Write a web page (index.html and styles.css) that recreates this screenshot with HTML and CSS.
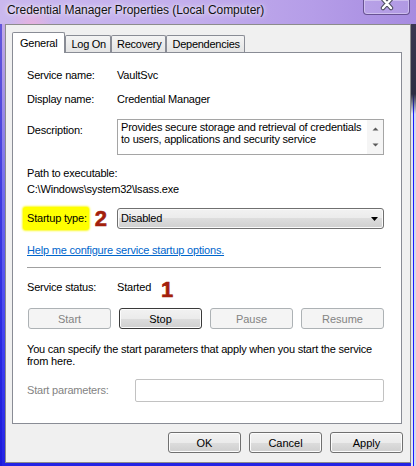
FILE: index.html
```html
<!DOCTYPE html>
<html>
<head>
<meta charset="utf-8">
<title>Credential Manager Properties (Local Computer)</title>
<link rel="stylesheet" href="styles.css">
</head>
<body>
<div class="frame">
  <div class="titlebar">
    <span class="title">Credential Manager Properties (Local Computer)</span>
    <div class="close">
      <svg width="14" height="11" viewBox="0 0 14 11">
        <path d="M3 -1 L11 8 M11 -1 L3 8" stroke="#4c4c5e" stroke-width="4.4" stroke-linecap="round"/>
        <path d="M3 -1 L11 8 M11 -1 L3 8" stroke="#ffffff" stroke-width="2.4" stroke-linecap="round"/>
      </svg>
    </div>
  </div>
  <div class="client">
    <div class="tabs">
      <div class="tab selected">General</div>
      <div class="tab">Log On</div>
      <div class="tab">Recovery</div>
      <div class="tab">Dependencies</div>
    </div>
    <div class="panel">
      <div class="row r-name">
        <span class="label">Service name:</span>
        <span>VaultSvc</span>
      </div>
      <div class="row r-display">
        <span class="label">Display name:</span>
        <span>Credential Manager</span>
      </div>
      <div class="row r-desc">
        <span class="label">Description:</span>
        <div class="desc">
          <div class="desc-text">Provides secure storage and retrieval of credentials<br>to users, applications and security service</div>
          <div class="scroll">
            <svg width="7" height="4" viewBox="0 0 7 4"><path d="M0.5 3.5 L3.5 0.5 L6.5 3.5 Z" fill="#5a5a5a"/></svg>
            <svg width="7" height="4" viewBox="0 0 7 4"><path d="M0.5 0.5 L3.5 3.5 L6.5 0.5 Z" fill="#5a5a5a"/></svg>
          </div>
        </div>
      </div>
      <div class="row r-path">Path to executable:</div>
      <div class="row r-exe">C:\Windows\system32\lsass.exe</div>
      <div class="row r-startup">
        <span class="label">
          <span class="hl">Startup type:</span>
          <span class="mark mark-2">2</span>
        </span>
        <div class="select">
          <span>Disabled</span>
          <svg width="7" height="4" viewBox="0 0 7 4"><path d="M0 0 L7 0 L3.5 4 Z" fill="#000"/></svg>
        </div>
      </div>
      <div class="row r-link"><a class="link" href="#">Help me configure service startup options.</a></div>
      <div class="sep"></div>
      <div class="row r-status">
        <span class="label">Service status:</span>
        <span>Started</span>
        <span class="mark mark-1">1</span>
      </div>
      <div class="svc-buttons">
        <button class="btn disabled">Start</button>
        <button class="btn stop">Stop</button>
        <button class="btn disabled">Pause</button>
        <button class="btn disabled">Resume</button>
      </div>
      <div class="para">You can specify the start parameters that apply when you start the service<br>from here.</div>
      <div class="row r-params">
        <span class="label label-params">Start parameters:</span>
        <div class="param-input"></div>
      </div>
    </div>
    <div class="actions">
      <button class="btn dlg">OK</button>
      <button class="btn dlg">Cancel</button>
      <button class="btn dlg">Apply</button>
    </div>
  </div>
</div>
</body>
</html>
```

FILE: styles.css
```css
body {
  margin: 0;
  font-family: "Liberation Sans", Arial, sans-serif;
  font-size: 11px;
  color: #000;
}

/* window frame */
.frame {
  width: 416px;
  height: 466px;
  box-sizing: border-box;
  padding: 0 5px 3px 5px;
  display: flex;
  flex-direction: column;
  background:
    linear-gradient(to bottom, #3a3650 0, #2e2e42 70px, rgba(46, 46, 66, 0) 90px) right 0 top 24px / 5px 120px no-repeat,
    linear-gradient(to right, #dfe5f5 0, #dfe5f5 2px, #1a1aff 2px, #1a1aff 3px, #cfdaf2 3px) right 0 top 24px / 5px 442px no-repeat,
    linear-gradient(to right, rgba(20, 20, 210, 0.55) 0, rgba(20, 20, 210, 0.55) 2px, transparent 2px),
    linear-gradient(to bottom, #c4abe6 24px, #a592e6 90px, #6e68ee 200px, #3e3ef0 350px, #2323e4 466px);
}
.titlebar {
  height: 24px;
  flex: none;
  margin: 0 -5px;
  padding: 0 6px 0 7px;
  display: flex;
  align-items: flex-start;
  background:
    radial-gradient(circle at 32px 26px, rgba(245, 175, 215, 0.7), rgba(245, 175, 215, 0) 22px),
    linear-gradient(to right, #cab8ee 0%, #c3aeec 45%, #b59de8 75%, #a68be0 100%);
}
.title {
  margin-top: 2px;
  font-size: 12px;
  line-height: 16px;
  color: #111;
  letter-spacing: -0.05px;
  text-shadow: 0 0 6px rgba(255, 255, 255, 0.9), 0 0 3px rgba(255, 255, 255, 0.7);
}
.close {
  margin-left: auto;
  width: 47px;
  height: 15px;
  box-sizing: border-box;
  border: 1px solid rgba(70, 50, 110, 0.7);
  border-top: 0;
  border-radius: 0 0 4px 4px;
  background: rgba(255, 255, 255, 0.12);
  box-shadow: inset 0 0 0 1px rgba(255, 255, 255, 0.35);
  display: flex;
  justify-content: center;
}

/* dialog body */
.client {
  flex: 1;
  border: 1px solid #8c8c8c;
  background: #f0f0f0;
  padding: 7px 7px 0 6px;
  display: flex;
  flex-direction: column;
}
.tabs {
  display: flex;
  align-items: flex-end;
  height: 20px;
}
.tab {
  height: 17px;
  box-sizing: border-box;
  padding: 0 4px 0 5px;
  border: 1px solid #898c95;
  border-bottom: 0;
  border-radius: 2px 2px 0 0;
  background: linear-gradient(#f4f4f4, #e4e4e4);
  line-height: 16px;
  letter-spacing: -0.25px;
}
.tab.selected {
  height: 21px;
  margin-bottom: -1px;
  padding: 0 7px;
  background: #fff;
  line-height: 20px;
  position: relative;
  z-index: 1;
}
.panel {
  width: 390px;
  height: 372px;
  box-sizing: border-box;
  border: 1px solid #898c95;
  background: #fff;
  padding: 16px 17px 0 14px;
  letter-spacing: -0.2px;
}
.row {
  display: flex;
  align-items: center;
  line-height: 13px;
}
.label {
  width: 90px;
  flex: none;
  display: flex;
  align-items: center;
}
.r-display { margin-top: 11px; }
.r-desc { margin-top: 13px; align-items: flex-start; }
.r-desc .label { margin-top: 5px; }
.r-path { margin-top: 12px; }
.r-exe { margin-top: 3px; }
.r-startup { margin-top: 11px; }
.r-link { margin-top: 14px; }
.r-status { margin-top: 11px; }
.r-params { margin-top: 12px; }

.desc {
  width: 267px;
  height: 36px;
  box-sizing: border-box;
  border: 1px solid #a5a5a5;
  display: flex;
}
.desc-text {
  flex: 1;
  padding: 1px 0 0 3px;
  line-height: 12px;
  white-space: nowrap;
  overflow: hidden;
}
.scroll {
  width: 16px;
  background: #f5f5f5;
  display: flex;
  flex-direction: column;
  justify-content: space-between;
  align-items: center;
  padding: 7px 0 7px 1px;
  box-sizing: border-box;
}

.hl {
  margin-left: -4px;
  padding: 5px 2px 5px 4px;
  background: #ffff00;
  border-radius: 3px;
  box-shadow: 0 0 2px 1px #fbfb30;
}
.mark {
  color: #a31f0b;
  font-weight: bold;
  font-size: 22px;
  line-height: 13px;
  letter-spacing: 0;
  -webkit-text-stroke: 0.6px #a31f0b;
}
.mark-2 { margin-left: 6px; }
.mark-1 { margin-left: 10px; margin-top: 4px; }

.select {
  width: 267px;
  height: 21px;
  box-sizing: border-box;
  border: 1px solid #707070;
  border-radius: 3px;
  background: linear-gradient(#f2f2f2, #ebebeb 50%, #dddddd 50%, #cfcfcf);
  box-shadow: inset 0 0 0 1px #fafafa;
  display: flex;
  align-items: center;
  justify-content: space-between;
  padding: 0 5px 0 3px;
}
.link {
  color: #0066cc;
  text-decoration: underline;
}
.sep {
  width: 354px;
  margin-top: 10px;
  border-top: 1px solid #a0a0a0;
}

/* buttons */
.btn {
  height: 21px;
  box-sizing: border-box;
  padding: 0;
  border: 1px solid #707070;
  border-radius: 3px;
  background: linear-gradient(#f2f2f2, #ebebeb 50%, #dddddd 50%, #cfcfcf);
  box-shadow: inset 0 0 0 1px #fcfcfc;
  font-family: "Liberation Sans", Arial, sans-serif;
  font-size: 11px;
  color: #000;
}
.btn.disabled {
  border-color: #adb2b5;
  background: #f4f4f4;
  box-shadow: none;
  color: #838383;
}
.btn.stop {
  border-color: #3a3a3a;
}
.svc-buttons {
  display: flex;
  gap: 8px;
  margin: 12px 0 0 1px;
}
.svc-buttons .btn { width: 83px; }

.para {
  margin-top: 14px;
  line-height: 12px;
  white-space: nowrap;
}
.label-params {
  width: 108px;
  color: #838383;
}
.param-input {
  width: 249px;
  height: 23px;
  box-sizing: border-box;
  border: 1px solid #c2c2c2;
  border-radius: 2px;
  background: #fff;
}

.actions {
  display: flex;
  justify-content: flex-end;
  gap: 8px;
  margin-top: 8px;
}
.btn.dlg { width: 73px; }
```
